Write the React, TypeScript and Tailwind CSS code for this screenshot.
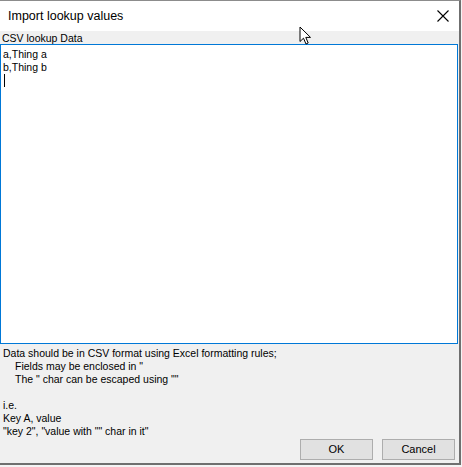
import React from "react"

const ui = { fontFamily: '"Liberation Sans", Arial, sans-serif' }

function Cursor() {
  return (
    <svg className="absolute left-[299px] top-[26px]" width="14" height="20" viewBox="0 0 14 20">
      <path d="M1 1 L1 15.5 L4.5 12.2 L7 18 L9.2 17 L6.8 11.4 L11.5 11.4 Z" fill="#fff" stroke="#000" strokeWidth="1" strokeLinejoin="miter" />
    </svg>
  )
}

export default function App() {
  return (
    <div style={ui} className="w-[462px] h-[467px] bg-[#f4f4f4] relative overflow-hidden">
      <div className="w-[461px] h-[465px] flex flex-col border-t border-t-[#8c8c8c] border-r-2 border-b-2 border-[#6f6f6f] bg-[#f0f0f0]">
        {/* title bar */}
        <div className="h-[30px] bg-white flex items-center justify-between pl-[8px] pr-[10px] shrink-0">
          <span className="text-[12.5px] text-black leading-none">Import lookup values</span>
          <svg width="12" height="12" viewBox="0 0 12 12">
            <path d="M0.5 0.5 L11.5 11.5 M11.5 0.5 L0.5 11.5" stroke="#000" strokeWidth="1.1" />
          </svg>
        </div>

        <div className="flex-1 flex flex-col text-[10.5px] text-black leading-[13px]">
          <div className="h-[13px] pl-[2px] pt-[1px]">CSV lookup Data</div>

          <div className="h-[300px] mr-[1px] bg-white border border-[#0078d7] pl-[2px] pt-[3px]">
            <div>a,Thing a</div>
            <div>b,Thing b</div>
            <div className="w-px h-[13px] bg-black ml-[1px]" />
          </div>

          <div className="pl-[3px] pt-[3px]">
            <div>Data should be in CSV format using Excel formatting rules;</div>
            <div className="pl-[12px]">Fields may be enclosed in "</div>
            <div className="pl-[12px]">The " char can be escaped using ""</div>
            <div className="h-[13px]" />
            <div>i.e.</div>
            <div>Key A, value</div>
            <div>"key 2", "value with "" char in it"</div>
          </div>

          <div className="flex justify-end gap-[9px] pr-[4px] mt-[1px]">
            <button className="w-[73px] h-[21px] bg-[#e1e1e1] border border-[#adadad] text-[11px] leading-none">OK</button>
            <button className="w-[73px] h-[21px] bg-[#e1e1e1] border border-[#adadad] text-[11px] leading-none">Cancel</button>
          </div>
        </div>
      </div>
      <Cursor />
    </div>
  )
}
